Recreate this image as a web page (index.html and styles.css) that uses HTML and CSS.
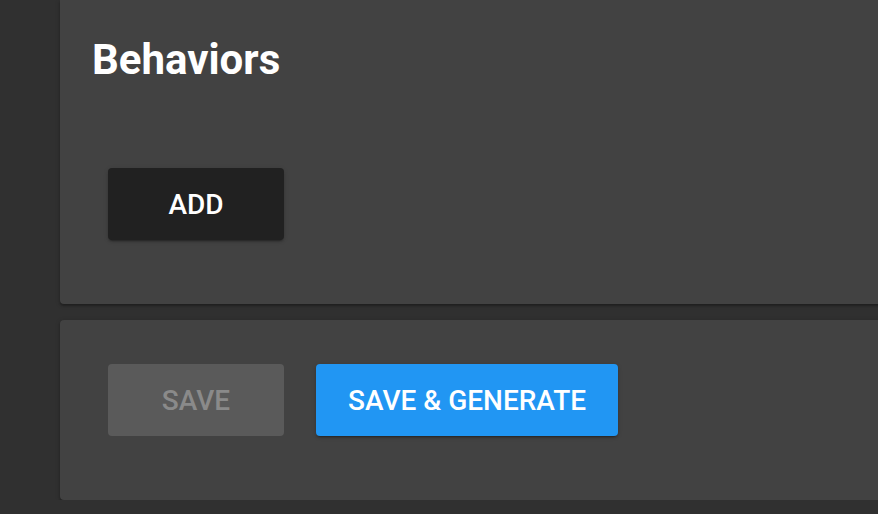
FILE: index.html
```html
<!DOCTYPE html>
<html>
<head>
<meta charset="utf-8">
<link rel="stylesheet" href="styles.css">
</head>
<body>
<main class="main">
  <section class="card card-behaviors">
    <h2 class="title">Behaviors</h2>
    <div class="actions actions-add">
      <button class="btn btn-dark">ADD</button>
    </div>
  </section>
  <section class="card card-save">
    <div class="actions">
      <button class="btn btn-disabled" disabled>SAVE</button>
      <button class="btn btn-primary">SAVE &amp; GENERATE</button>
    </div>
  </section>
</main>
</body>
</html>
```
FILE: styles.css
```css
html, body {
  margin: 0;
  padding: 0;
  background: #303030;
  overflow: hidden;
  font-family: Roboto, "Liberation Sans", sans-serif;
}
.main {
  display: flex;
  flex-direction: column;
  gap: 16px;
  padding-left: 60px;
  width: 900px;
}
.card {
  background: #424242;
  border-radius: 4px;
  box-shadow: 0 2px 2px rgba(0,0,0,0.24), 0 1px 5px rgba(0,0,0,0.2);
}
.card-behaviors {
  height: 304px;
  box-sizing: border-box;
  padding: 30px 32px 0;
  border-top-left-radius: 0;
  border-top-right-radius: 0;
}
.title {
  margin: 0;
  color: #fff;
  font-size: 42px;
  font-weight: 700;
  line-height: 60px;
}
.actions {
  display: flex;
  gap: 32px;
  padding-left: 48px;
}
.actions-add {
  margin-top: 78px;
  padding-left: 16px;
}
.card-save {
  height: 180px;
  box-sizing: border-box;
  padding-top: 44px;
}
.btn {
  height: 72px;
  min-width: 176px;
  padding: 0 32px;
  border: none;
  border-radius: 4px;
  font-family: Roboto, "Liberation Sans", sans-serif;
  font-size: 28px;
  font-weight: 500;
  letter-spacing: 0;
  color: #fff;
}
.btn-dark {
  background: #212121;
  box-shadow: 0 3px 1px -2px rgba(0,0,0,0.2), 0 2px 2px 0 rgba(0,0,0,0.14), 0 1px 5px 0 rgba(0,0,0,0.12);
}
.btn-disabled {
  background: #5a5a5a;
  color: #8a8a8a;
}
.btn-primary {
  background: #2196f3;
  box-shadow: 0 3px 1px -2px rgba(0,0,0,0.2), 0 2px 2px 0 rgba(0,0,0,0.14), 0 1px 5px 0 rgba(0,0,0,0.12);
}
```
